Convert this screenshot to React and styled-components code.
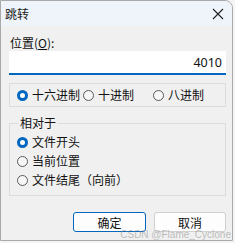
import React from "react";
import styled, { createGlobalStyle } from "styled-components";

const Global = createGlobalStyle`
  html, body { margin: 0; padding: 0; background: #f4f4f4; }
  body { font-family: "Noto Sans CJK SC", "Noto Sans", sans-serif; }
`;

const Dialog = styled.div`
  position: relative;
  width: 233px;
  height: 241px;
  box-sizing: border-box;
  border: 1px solid #a9a9a9;
  border-top-right-radius: 8px;
  background: #f0f0f0;
  display: flex;
  flex-direction: column;
`;

const TitleBar = styled.div`
  height: 25px;
  flex: none;
  background: #eef4f9;
  border-top-right-radius: 7px;
  display: flex;
  align-items: center;
  justify-content: space-between;
  padding-left: 4px;
  padding-right: 8px;
  font-size: 12px;
  color: #1a1a1a;
`;

const Body = styled.div`
  display: flex;
  flex-direction: column;
  padding: 0 6px 0 8px;
  flex: 1;
`;

const Label = styled.div`
  margin-top: 9px;
  font-size: 12px;
  line-height: 16px;
  color: #111;
  padding-left: 1px;
  u { text-decoration: underline; text-underline-offset: 1px; }
`;

const Input = styled.div`
  height: 24px;
  box-sizing: border-box;
  background: #fff;
  border-bottom: 2px solid #0067c0;
  display: flex;
  align-items: center;
  justify-content: flex-end;
  padding-right: 4px;
  font-family: "Noto Sans", sans-serif;
  font-size: 12.5px;
  color: #111;
`;

const RadioRow = styled.div`
  margin-top: 8px;
  height: 24px;
  box-sizing: border-box;
  border: 1px solid #dcdcdc;
  display: flex;
  align-items: center;
  padding-left: 7px;
`;

const Option = styled.label`
  display: flex;
  align-items: center;
  gap: 4px;
  font-size: 12px;
  line-height: 16px;
  color: #111;
  width: ${(p) => p.$w || "auto"};
`;

const Dot = styled.span`
  width: 11px;
  height: 11px;
  box-sizing: border-box;
  border-radius: 50%;
  flex: none;
  border: ${(p) => (p.$on ? "3.5px solid #0067c0" : "1px solid #5a5a5a")};
  background: ${(p) => (p.$on ? "#fff" : "#f7f7f7")};
`;

const Group = styled.fieldset`
  margin: 9px 0 0 0;
  padding: 4px 0 7px 7px;
  border: 1px solid #dcdcdc;
  display: flex;
  flex-direction: column;
  gap: 3px;
  min-width: 0;
  legend {
    font-size: 12px;
    line-height: 14px;
    padding: 0 2px;
    margin-left: 1px;
    color: #111;
  }
`;

const Buttons = styled.div`
  margin-top: auto;
  margin-bottom: 8px;
  display: flex;
  justify-content: flex-end;
  gap: 8px;
`;

const Button = styled.div`
  width: ${(p) => p.$w}px;
  height: 20px;
  box-sizing: border-box;
  border-radius: 3px;
  border: 1px solid ${(p) => (p.$primary ? "#0067c0" : "#d0d0d0")};
  background: #fdfdfd;
  display: flex;
  align-items: center;
  justify-content: center;
  font-size: 12px;
  color: #111;
`;

const Watermark = styled.div`
  position: absolute;
  right: 1px;
  bottom: 0;
  line-height: 11px;
  font-family: "Liberation Sans", sans-serif;
  font-size: 10px;
  color: rgba(140, 140, 140, 0.55);
`;

function Radio({ on, children, w }) {
  return (
    <Option $w={w}>
      <Dot $on={on} />
      {children}
    </Option>
  );
}

export default function App() {
  return (
    <>
      <Global />
      <Dialog>
        <TitleBar>
          <span>跳转</span>
          <svg width="12" height="12" viewBox="0 0 12 12">
            <path d="M1 1L11 11M11 1L1 11" stroke="#222" strokeWidth="1.1" />
          </svg>
        </TitleBar>
        <Body>
          <Label>
            位置(<u>O</u>):
          </Label>
          <Input>4010</Input>
          <RadioRow>
            <Radio on w="66px">十六进制</Radio>
            <Radio w="70px">十进制</Radio>
            <Radio>八进制</Radio>
          </RadioRow>
          <Group>
            <legend>相对于</legend>
            <Radio on>文件开头</Radio>
            <Radio>当前位置</Radio>
            <Radio>文件结尾（向前）</Radio>
          </Group>
          <Buttons>
            <Button $primary $w={73}>确定</Button>
            <Button $w={72}>取消</Button>
          </Buttons>
        </Body>
        <Watermark>CSDN @Flame_Cyclone</Watermark>
      </Dialog>
    </>
  );
}
